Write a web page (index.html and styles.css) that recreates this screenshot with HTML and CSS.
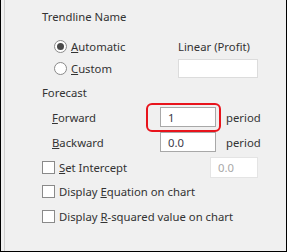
FILE: index.html
```html
<!DOCTYPE html>
<html lang="en">
<head>
    <meta charset="UTF-8">
    <title>Format Trendline</title>
    <link rel="stylesheet" href="styles.css">
</head>
<body>

    <div class="pane">
        <div class="pane-inner">

            <!-- Trendline name -->
            <div class="row title-row">Trendline Name</div>

            <div class="row name-row">
                <label class="choice">
                    <span class="radio checked"></span>
                    <span><u>A</u>utomatic</span>
                </label>
                <span class="auto-name">Linear (Profit)</span>
            </div>

            <div class="row name-row custom-row">
                <label class="choice">
                    <span class="radio"></span>
                    <span><u>C</u>ustom</span>
                </label>
                <div class="field custom-field"></div>
            </div>

            <!-- Forecast -->
            <div class="row forecast-row">Forecast</div>

            <div class="row period-row forward-row">
                <span class="period-label"><u>F</u>orward</span>
                <div class="field period-field">1</div>
                <span class="unit">period</span>
                <div class="highlight"></div>
            </div>

            <div class="row period-row backward-row">
                <span class="period-label"><u>B</u>ackward</span>
                <div class="field period-field">0.0</div>
                <span class="unit">period</span>
            </div>

            <!-- Options -->
            <div class="row check-row intercept-row">
                <label class="choice">
                    <span class="box"></span>
                    <span><u>S</u>et Intercept</span>
                </label>
                <div class="field intercept-field">0.0</div>
            </div>

            <div class="row check-row equation-row">
                <label class="choice">
                    <span class="box"></span>
                    <span>Display <u>E</u>quation on chart</span>
                </label>
            </div>

            <div class="row check-row rsq-row">
                <label class="choice">
                    <span class="box"></span>
                    <span>Display <u>R</u>-squared value on chart</span>
                </label>
            </div>

        </div>
    </div>

</body>
</html>
```

FILE: styles.css
```css
/* Trendline options panel */
body {
    margin: 0;
    font-family: "Noto Sans", "Open Sans", sans-serif;
    font-size: 11.3px;
    color: #333;
}

.pane {
    width: 287px;
    height: 252px;
    box-sizing: border-box;
    background-color: #f0f0f0;
    border: 1px solid #000;
    border-top: none;
    padding-left: 3px;
}

.pane-inner {
    height: 100%;
    border-left: 1px solid #cfcfcf;
    padding-top: 6px;
    padding-left: 37px;
    box-sizing: border-box;
}

.row {
    display: flex;
    align-items: center;
    height: 20px;
    white-space: nowrap;
}

.title-row {
    margin-bottom: 10px;
}

.name-row {
    padding-left: 12px;
}

.custom-row {
    height: 22px;
    margin-top: 1px;
}

.forecast-row {
    margin-top: 3px;
}

.choice {
    display: flex;
    align-items: center;
    gap: 4px;
}

.name-row .choice {
    width: 124px;
}

.radio {
    width: 13px;
    height: 13px;
    border: 1px solid #8a8a8a;
    border-radius: 50%;
    background-color: #fff;
    box-sizing: border-box;
    display: flex;
    align-items: center;
    justify-content: center;
}

.radio.checked::after {
    content: "";
    width: 7px;
    height: 7px;
    border-radius: 50%;
    background-color: #4a4a4a;
}

.box {
    width: 13px;
    height: 13px;
    border: 1px solid #8a8a8a;
    background-color: #fff;
    box-sizing: border-box;
}

.field {
    box-sizing: border-box;
    background-color: #fff;
    height: 20px;
    display: flex;
    align-items: center;
    padding-left: 7px;
}

.custom-field {
    width: 80px;
    height: 19px;
    border: 1px solid #dcdcdc;
}

.period-row {
    position: relative;
    padding-left: 10px;
}

.forward-row {
    height: 26px;
    margin-top: 2px;
}

.backward-row {
    height: 22px;
    margin-top: 1px;
}

.period-label {
    width: 108px;
}

.period-field {
    width: 56px;
    border: 1px solid #a8a8a8;
    color: #3b3b4b;
}

.unit {
    margin-left: 10px;
}

/* red call-out round the forward box */
.highlight {
    position: absolute;
    left: 104px;
    top: -1px;
    width: 75px;
    height: 29px;
    box-sizing: border-box;
    border: 2px solid #e8141c;
    border-radius: 6px;
}

.check-row {
    justify-content: space-between;
    width: 216px;
}

.intercept-row {
    height: 22px;
    margin-top: 3px;
}

.equation-row {
    height: 22px;
    margin-top: 2px;
}

.rsq-row {
    height: 22px;
    margin-top: 3px;
}

.intercept-field {
    width: 48px;
    height: 21px;
    border: 1px solid #e4e4e4;
    color: #a8a8a8;
    padding-left: 7px;
}
```
